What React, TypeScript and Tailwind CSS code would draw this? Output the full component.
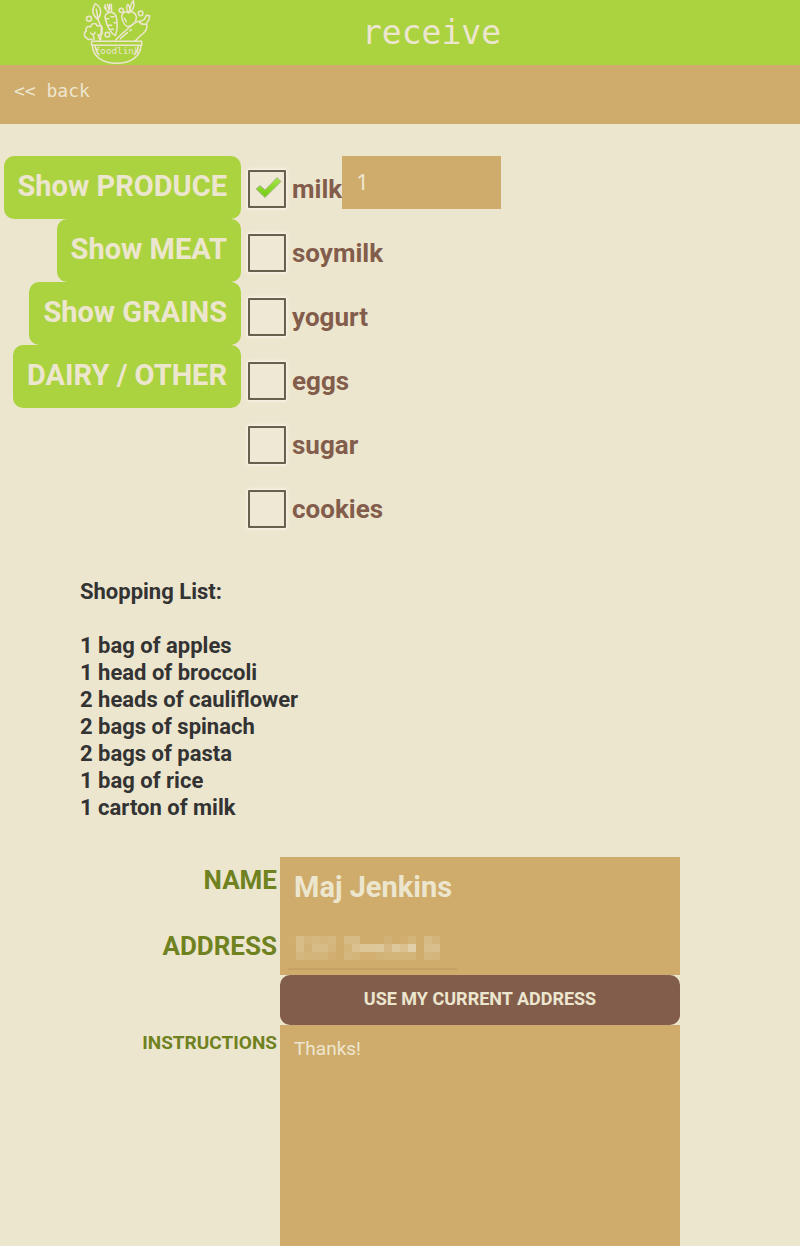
import { useState } from "react";

const categories = ["Show PRODUCE", "Show MEAT", "Show GRAINS", "DAIRY / OTHER"];
const items = ["milk", "soymilk", "yogurt", "eggs", "sugar", "cookies"];
const shoppingList = [
  "1 bag of apples",
  "1 head of broccoli",
  "2 heads of cauliflower",
  "2 bags of spinach",
  "2 bags of pasta",
  "1 bag of rice",
  "1 carton of milk",
];

// Opacity of each cell of the obscured address, row by row.
const mosaic = [
  [4, 30, 17, 21, 18, 21, 3, 25, 25, 0, 0, 0, 10, 0, 5, 16, 0, 25, 15],
  [0, 30, 10, 28, 28, 18, 0, 16, 36, 46, 46, 48, 23, 48, 36, 60, 0, 32, 34],
  [0, 20, 16, 15, 16, 7, 0, 20, 16, 8, 8, 12, 16, 16, 16, 16, 0, 20, 18],
];

function Logo() {
  return (
    <svg viewBox="0 0 300 195" className="h-[65px] w-[100px]" fill="none" stroke="#ede6cf" strokeWidth="4.5" strokeLinecap="round" strokeLinejoin="round" role="img" aria-label="foodlink">
      <circle cx="57" cy="56" r="7.5" />
      <circle cx="112" cy="104" r="7" />
      <circle cx="154" cy="31" r="6.5" />
      <circle cx="212" cy="40" r="7" />
      {/* leaf */}
      <path d="M83 58C65 44 65 28 76 11C92 20 99 38 83 58ZM79 28L85 62L94 80L92 120" />
      {/* broccoli */}
      <path d="M66 118C61 119 54 120 50 114C41 111 41 96 49 93C45 84 53 76 62 81C64 68 79 68 82 78C92 74 101 83 95 92C101 101 92 108 84 104L90 120M62 99C66 106 75 104 75 97M70 105L72 118" />
      {/* carrot */}
      <path d="M112 40C104 43 104 50 107 60C111 78 123 101 136 107C142 90 142 66 139 52C136 37 124 34 112 40ZM114 38L103 22M118 37L113 13M125 37L124 13M108 27L105 14M119 28L119 13M107 56H116M123 50H132M115 76H125M132 68H140M124 88H130" />
      {/* beet */}
      <path d="M176 39C164 31 153 42 156 54C158 66 166 76 172 80C186 79 201 66 199 50C196 36 183 32 176 39ZM176 38C169 31 169 20 173 13C180 19 181 29 176 38ZM180 35C180 23 184 10 190 2C194 17 191 29 180 35M163 55L169 65" />
      {/* bottle */}
      <path d="M137 120C149 107 166 92 183 78C193 70 200 62 211 64L223 58L229 46L239 47L237 59L229 71C236 85 222 101 208 110L196 122M208 65C211 74 218 74 228 72M151 116L172 98M179 93L184 89" />
      {/* bowl */}
      <path d="M65 124H215V136H65ZM67 137C69 166 93 190 140 190C187 190 211 166 213 137M75 137C77 149 80 157 87 164M205 137C203 149 200 157 193 164" />
      <text x="74" y="162" fill="#ede6cf" stroke="none" fontSize="28" fontFamily="'DejaVu Sans Mono', monospace">foodlink</text>
    </svg>
  );
}

function CheckItem({ name }: { name: string }) {
  const [checked, setChecked] = useState(name === "milk");
  return (
    <li className="flex h-16 items-start">
      <label className="mt-[14px] flex h-[38px] items-center gap-[6px] text-[26px] font-bold text-[#835d4b]">
        <span className="grid size-[38px]">
          <input
            type="checkbox"
            checked={checked}
            onChange={(e) => setChecked(e.target.checked)}
            className="col-start-1 row-start-1 size-[38px] appearance-none rounded-[1px] border-2 border-[#66604f] bg-[#eee8d4] shadow-[0_0_3px_1px_#faf7ec]"
          />
          {checked && (
            <svg viewBox="0 0 38 38" className="pointer-events-none col-start-1 row-start-1 size-[38px]">
              <defs>
                <linearGradient id="tick" x1="0" y1="0" x2="0" y2="1">
                  <stop offset="0" stopColor="#a5e848" />
                  <stop offset="1" stopColor="#72c910" />
                </linearGradient>
              </defs>
              <path d="M8 19L12 15.500L17 20L29 7.500L33 11.500L17 27.500Z" fill="url(#tick)" stroke="#a9b68c" strokeWidth="1" strokeLinejoin="round" />
            </svg>
          )}
        </span>
        {name}
      </label>
      {checked && (
        <input
          aria-label={`${name} quantity`}
          defaultValue="1"
          className="h-[53px] w-[159px] bg-[#cfac6b] px-[14px] pb-1 font-['Noto_Sans',sans-serif] text-[22px] text-[#ede6cf] outline-none"
        />
      )}
    </li>
  );
}

export default function App() {
  return (
    <div className="flex min-h-screen flex-col bg-[#ede6cf] font-['Roboto',sans-serif]">
      <header className="flex h-[65px] items-center bg-[#abd340] pl-[70px]">
        <Logo />
        <h1 className="ml-[192px] font-['DejaVu_Sans_Mono',monospace] text-[33px] leading-[65px] text-[#ede6cf]">receive</h1>
      </header>
      <nav className="h-[59px] bg-[#cfac6b] px-[14px] pt-[14px]">
        <a href="#back" className="block font-['DejaVu_Sans_Mono',monospace] text-[18px] leading-6 text-[#ede6cf]">&lt;&lt; back</a>
      </nav>

      <main className="flex grow flex-col pt-8">
        <section className="flex gap-[7px]">
          <div className="flex w-[241px] flex-col items-end">
            {categories.map((c) => (
              <button key={c} type="button" className="h-[63px] whitespace-nowrap rounded-[10px] bg-[#abd340] px-[14px] pb-[2px] text-[29px] font-bold text-[#ede6cf]">
                {c}
              </button>
            ))}
          </div>
          <ul>
            {items.map((name) => (
              <CheckItem key={name} name={name} />
            ))}
          </ul>
        </section>

        <section className="mt-[38px] px-[10%] text-[22px] font-bold leading-[27px] text-[#333333]">
          <h2>Shopping List:</h2>
          <ul className="mt-[27px]">
            {shoppingList.map((line) => (
              <li key={line}>{line}</li>
            ))}
          </ul>
        </section>

        <form className="mt-9 grid grow grid-cols-[35%_50%] grid-rows-[65px_53px_50px_1fr] text-[#6f821f]" onSubmit={(e) => e.preventDefault()}>
          <label htmlFor="name" className="pr-[3px] pt-[7px] text-right text-[26px] font-bold leading-8">NAME</label>
          <input id="name" defaultValue="Maj Jenkins" className="min-w-0 bg-[#cfac6b] px-[14px] pb-1 text-[29px] font-bold text-[#ede6cf] outline-none" />

          <label htmlFor="address" className="pr-[3px] pt-2 text-right text-[26px] font-bold leading-8">ADDRESS</label>
          <div className="relative bg-[#cfac6b]">
            <input id="address" className="size-full bg-transparent px-[14px] text-[29px] text-[#ede6cf] outline-none" />
            <svg viewBox="0 0 170 36" className="pointer-events-none absolute left-2 top-[14px] h-9 w-[170px]" aria-hidden="true">
              {mosaic.map((row, y) =>
                row.map((o, x) => <rect key={`${x}-${y}`} x={x * 8} y={y * 8} width="8" height="8" fill="#ede6cf" opacity={o / 100} />),
              )}
              <rect x="0" y="32" width="169" height="2" fill="#c5a164" />
            </svg>
          </div>

          <button type="button" className="col-start-2 rounded-[10px] bg-[#835d4b] pb-1 text-[18px] font-bold text-[#ede6cf]">USE MY CURRENT ADDRESS</button>

          <label htmlFor="instructions" className="pr-[3px] pt-[6px] text-right text-[19px] font-bold leading-6">INSTRUCTIONS</label>
          <textarea id="instructions" defaultValue="Thanks!" className="min-h-[220px] min-w-0 resize-none bg-[#cfac6b] px-[14px] py-3 text-[19px] leading-6 text-[#ede6cf] outline-none" />
        </form>
      </main>
    </div>
  );
}
